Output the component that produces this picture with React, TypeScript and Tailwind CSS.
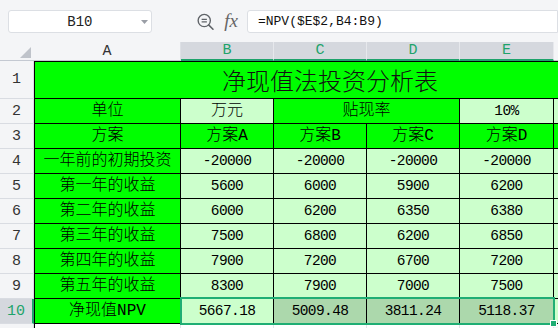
import React from 'react'

const BRIGHT = 'bg-[#00ff00]'
const LIGHT = 'bg-[#ccffcc]'
const SEL = 'bg-[#acd8ac]'

const widths = ['w-[147px]', 'w-[93px]', 'w-[93px]', 'w-[93px]', 'w-[94px]']

type Row = { label: string; values: string[] }

const rows: Row[] = [
  { label: '一年前的初期投资', values: ['-20000', '-20000', '-20000', '-20000'] },
  { label: '第一年的收益', values: ['5600', '6000', '5900', '6200'] },
  { label: '第二年的收益', values: ['6000', '6200', '6350', '6380'] },
  { label: '第三年的收益', values: ['7500', '6800', '6200', '6850'] },
  { label: '第四年的收益', values: ['7900', '7200', '6700', '7200'] },
  { label: '第五年的收益', values: ['8300', '7900', '7000', '7500'] },
]

const npv = ['5667.18', '5009.48', '3811.24', '5118.37']

function RowHead(props: { n: number; h: string; active?: boolean }) {
  return (
    <div
      className={`${props.h} w-[34px] shrink-0 flex items-center justify-center border-b border-[#d9dce2] text-[15px] ${
        props.active
          ? 'bg-[#d5d8de] text-[#1ea36b] border-r-2 border-r-[#1ea36b]'
          : 'bg-[#f4f5f7] text-[#333] border-r border-r-[#d9dce2]'
      }`}
    >
      {props.n}
    </div>
  )
}

function Cell(props: { w: string; bg: string; children?: React.ReactNode; cjk?: boolean; first?: boolean }) {
  return (
    <div
      className={`${props.w} ${props.bg} shrink-0 h-full flex items-center justify-center border-r border-b border-black text-black ${
        props.first ? 'border-l' : ''
      } ${props.cjk ? 'text-[16px] font-light' : 'text-[14.5px] tracking-[-0.6px]'}`}
    >
      {props.children}
    </div>
  )
}

export default function App() {
  return (
    <div className="relative w-[558px] h-[328px] overflow-hidden bg-[#f4f5f7] font-['Liberation_Mono','Noto_Sans_CJK_SC',monospace] leading-none">
      {/* 工具栏 */}
      <div className="h-[42px] flex items-start pt-[10px] pl-[8px]">
        <div className="relative w-[148px] h-[23px] bg-white border border-[#dcdfe4] rounded-[3px] flex items-center justify-center text-[14px] text-[#222]">
          B10
          <svg className="absolute right-[3px] top-[9px]" width="7" height="4" viewBox="0 0 7 4">
            <path d="M0 0 L7 0 L3.5 4 Z" fill="#9a9ea6" />
          </svg>
        </div>
        <svg className="ml-[44px] mt-[2px]" width="20" height="20" viewBox="0 0 20 20">
          <circle cx="8.5" cy="8.5" r="6.3" fill="none" stroke="#5f6368" strokeWidth="1.4" />
          <path d="M13 13 L17.5 17.5" stroke="#5f6368" strokeWidth="1.6" strokeLinecap="round" />
          <path d="M5.8 7.3 H11.2 M5.8 9.9 H11.2" stroke="#5f6368" strokeWidth="1.2" />
        </svg>
        <span className="ml-[9px] mt-[1px] text-[19px] italic text-[#666] font-['Liberation_Serif',serif]">fx</span>
        <div className="ml-[9px] w-[320px] h-[23px] bg-white border border-[#dcdfe4] rounded-l-[3px] flex items-center pl-[10px] text-[13px] text-[#111]">
          =NPV($E$2,B4:B9)
        </div>
      </div>

      {/* 列标题 */}
      <div className="flex h-[19px]">
        <div className="relative w-[34px] shrink-0 border-b border-[#c4c9d2]">
          <svg className="absolute left-[20px] top-[5px]" width="11" height="11" viewBox="0 0 11 11">
            <path d="M11 0 L11 11 L0 11 Z" fill="#bfc3ca" />
          </svg>
        </div>
        <div className="w-[147px] shrink-0 flex items-center justify-center text-[15px] text-[#333] border-b border-[#c4c9d2] border-r border-r-[#dde0e5]">
          A
        </div>
        {['B', 'C', 'D', 'E'].map((c, i) => (
          <div
            key={c}
            className={`${widths[i + 1]} shrink-0 flex items-center justify-center text-[15px] text-[#1ea36b] bg-[#d5d8de] border-b-2 border-[#1ea36b] border-r border-r-[#e6e8ec]`}
          >
            {c}
          </div>
        ))}
        <div className="w-[80px] shrink-0 border-b border-[#c4c9d2]" />
      </div>

      {/* 第1行 */}
      <div className="flex h-[38px]">
        <RowHead n={1} h="h-[38px]" />
        <div className="w-[592px] shrink-0 h-full bg-[#00ff00] border border-black flex items-center justify-center text-[24px] font-light text-[#111] font-['Noto_Sans_CJK_SC',sans-serif]">
          净现值法投资分析表
        </div>
      </div>

      {/* 第2行 */}
      <div className="flex h-[25px]">
        <RowHead n={2} h="h-[25px]" />
        <Cell w={widths[0]} bg={BRIGHT} cjk first>单位</Cell>
        <Cell w={widths[1]} bg={LIGHT} cjk>万元</Cell>
        <Cell w="w-[186px]" bg={BRIGHT} cjk>贴现率</Cell>
        <Cell w={widths[4]} bg={LIGHT}>10%</Cell>
        <Cell w="w-[80px]" bg={LIGHT} />
      </div>

      {/* 第3行 */}
      <div className="flex h-[25px]">
        <RowHead n={3} h="h-[25px]" />
        <Cell w={widths[0]} bg={BRIGHT} cjk first>方案</Cell>
        {['A', 'B', 'C', 'D'].map((s, i) => (
          <Cell key={s} w={widths[i + 1]} bg={BRIGHT} cjk>
            方案{s}
          </Cell>
        ))}
        <Cell w="w-[80px]" bg={BRIGHT} />
      </div>

      {rows.map((r, idx) => (
        <div key={r.label} className="flex h-[25px]">
          <RowHead n={idx + 4} h="h-[25px]" />
          <Cell w={widths[0]} bg={BRIGHT} cjk first>{r.label}</Cell>
          {r.values.map((v, i) => (
            <Cell key={i} w={widths[i + 1]} bg={LIGHT}>{v}</Cell>
          ))}
          <Cell w="w-[80px]" bg={LIGHT} />
        </div>
      ))}

      {/* 第10行 */}
      <div className="flex h-[25px]">
        <RowHead n={10} h="h-[25px]" active />
        <Cell w={widths[0]} bg={BRIGHT} cjk first>净现值NPV</Cell>
        {npv.map((v, i) => (
          <Cell key={i} w={widths[i + 1]} bg={i === 0 ? LIGHT : SEL}>{v}</Cell>
        ))}
        <Cell w="w-[80px]" bg={LIGHT} />
      </div>

      {/* 第11行 */}
      <div className="flex h-[25px]">
        <div className="w-[34px] shrink-0 h-full bg-[#f4f5f7] border-r border-[#d9dce2]" />
        <div className="w-[147px] shrink-0 h-full bg-white border-l border-black border-r border-r-[#e2e4e8]" />
        {[1, 2, 3, 4].map((i) => (
          <div key={i} className={`${widths[i]} shrink-0 h-full bg-white border-r border-[#e2e4e8]`} />
        ))}
      </div>

      {/* 选区 */}
      <div className="absolute left-[180px] top-[297px] w-[375px] h-[28px] border-2 border-[#1fae74] pointer-events-none" />
      <div className="absolute left-[550px] top-[320px] w-[7px] h-[7px] bg-[#1fae74] border border-white" />
    </div>
  )
}
